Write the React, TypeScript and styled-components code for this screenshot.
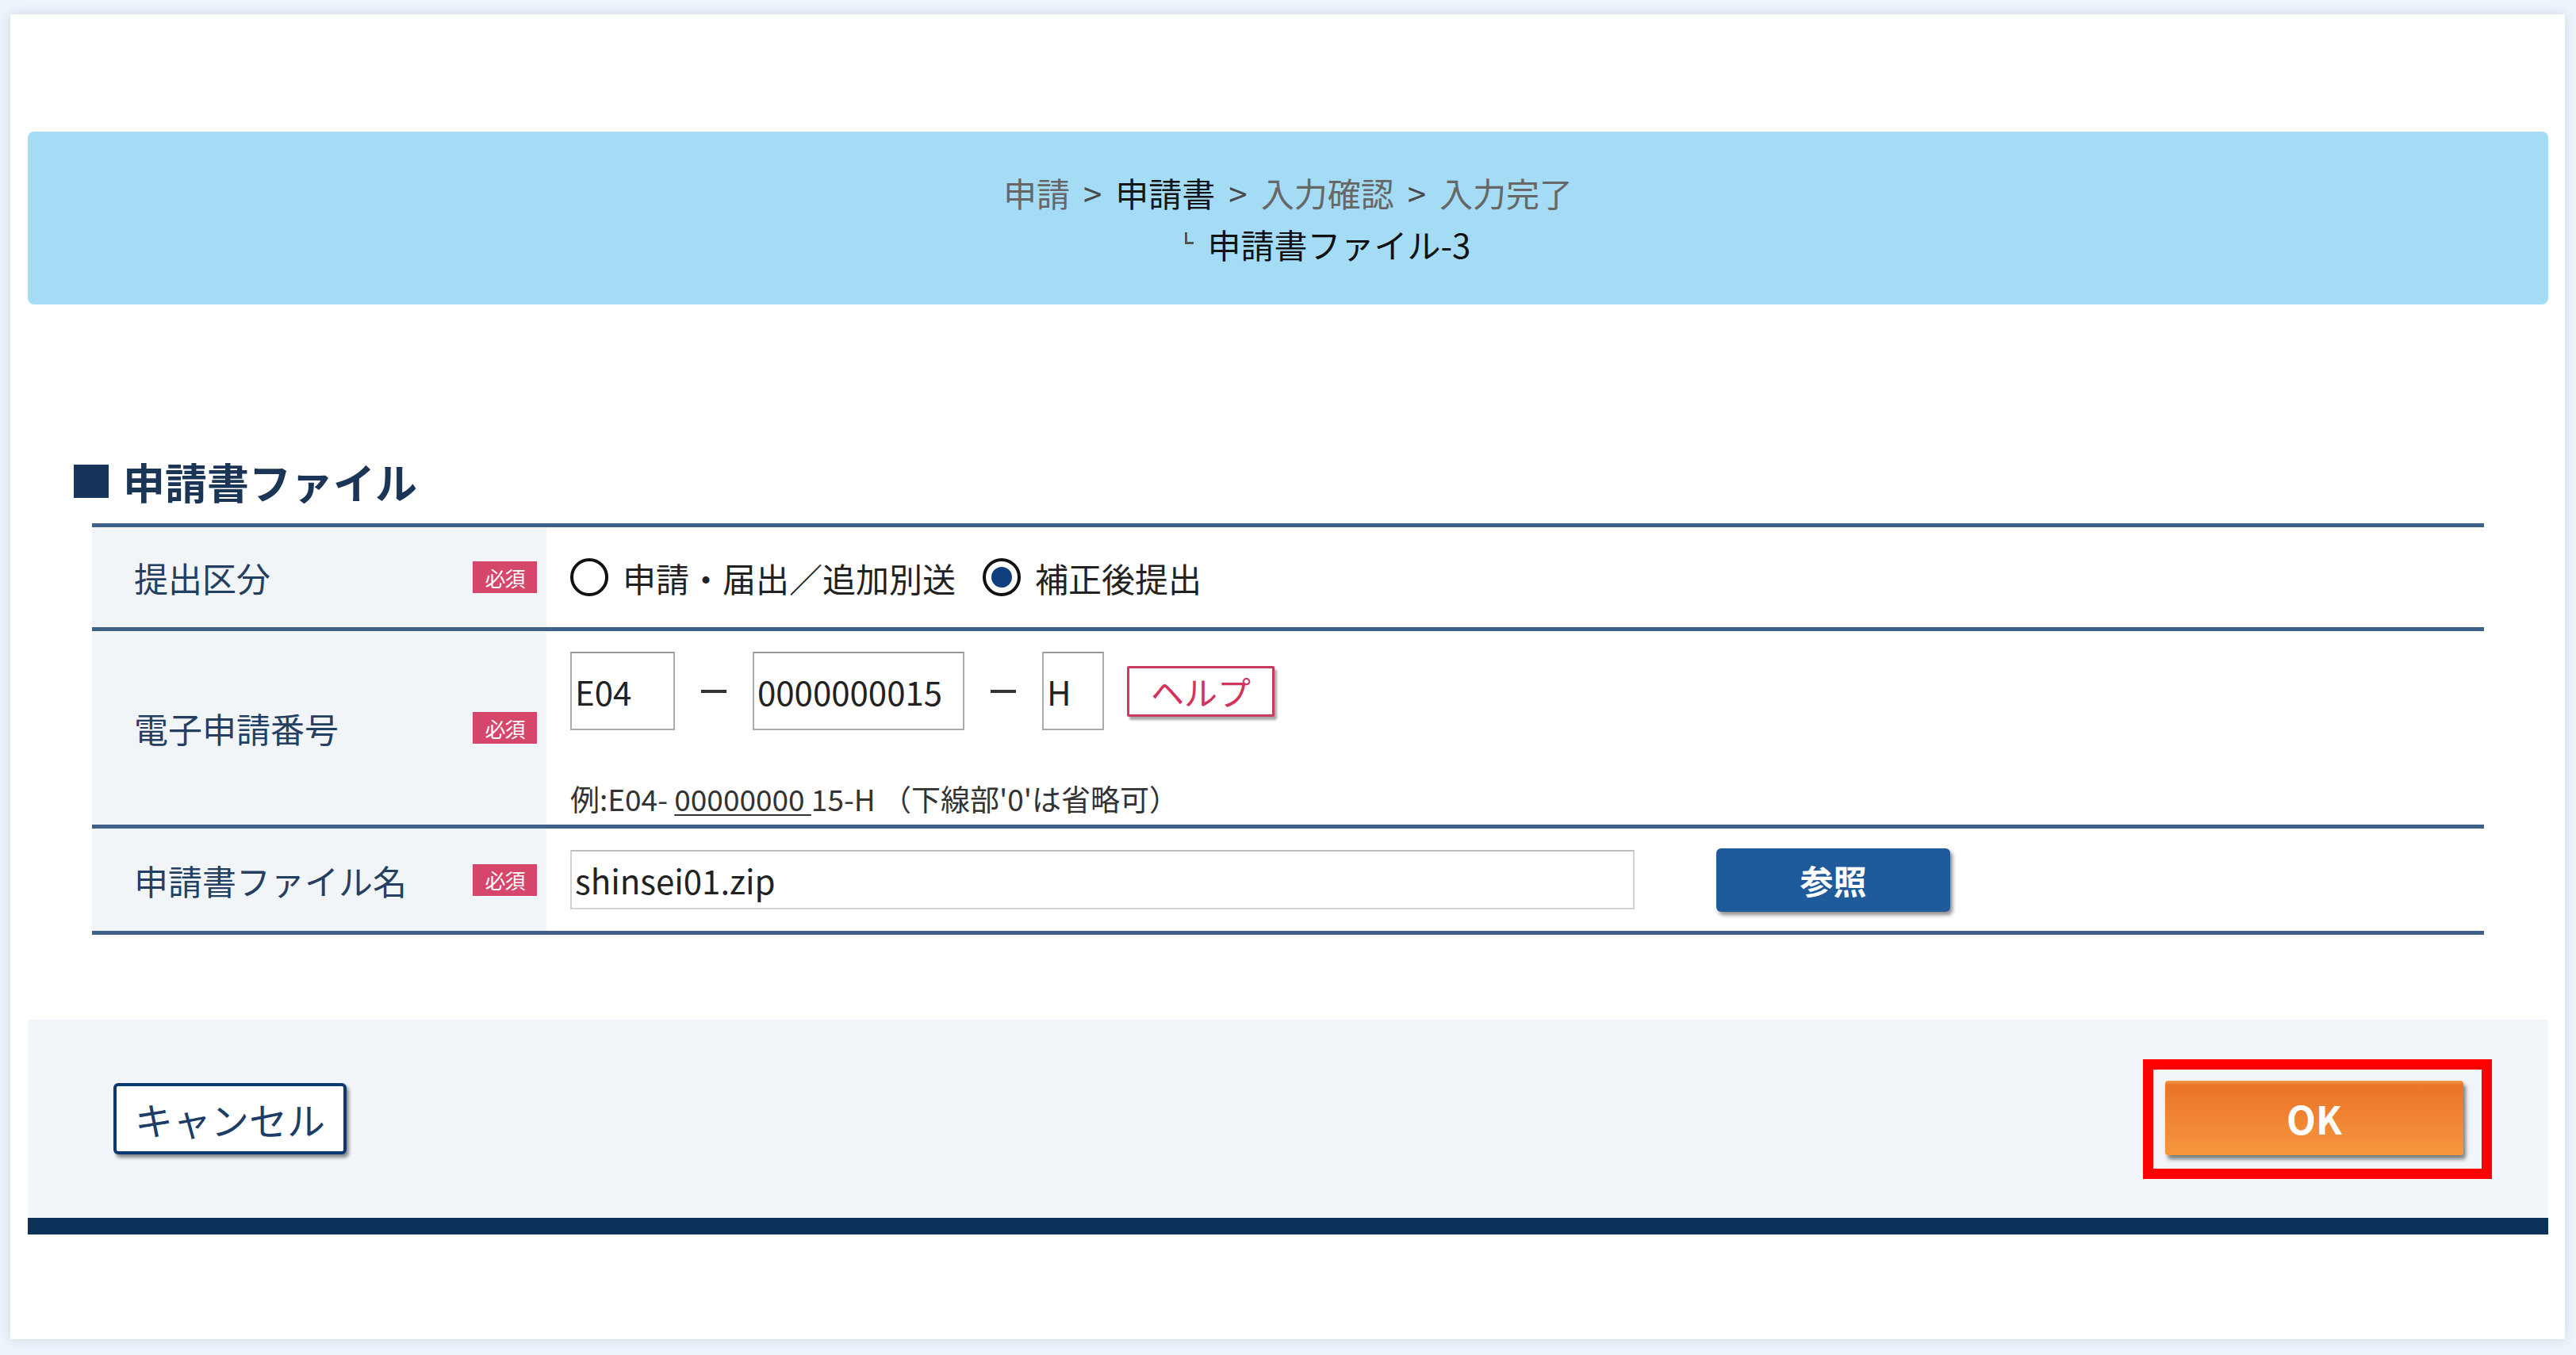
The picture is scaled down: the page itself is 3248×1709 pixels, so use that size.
import styled, { createGlobalStyle } from "styled-components";

const GlobalStyle = createGlobalStyle`
  body {
    margin: 0;
    background: #eef4fc;
    font-family: "Noto Sans CJK JP", "Noto Sans", sans-serif;
    color: #222;
  }
`;

const Page = styled.div`
  padding: 18px 14px 21px 13px;
`;

const Card = styled.div`
  background: #fff;
  box-shadow: 0 0 14px rgba(40, 60, 90, 0.16);
  padding: 148px 21px 132px 22px;
`;

const Banner = styled.div`
  background: #a4dbf5;
  border-radius: 8px;
  padding: 44px 0 44px;
  text-align: center;
  font-size: 42px;
  line-height: 65px;
`;

const Crumb = styled.span<{ current?: boolean }>`
  color: ${({ current }) => (current ? "#151515" : "#676767")};
`;

const Sep = styled.span`
  color: #4a4a4a;
  margin: 0 17px;
`;

const SubCrumb = styled.div`
  color: #111;
  display: flex;
  justify-content: center;
  align-items: center;
  padding-left: 100px;
`;

const Corner = styled.span`
  display: inline-block;
  width: 8px;
  height: 12px;
  border-left: 3px solid #555;
  border-bottom: 3px solid #555;
  margin: -14px 18px 0 0;
`;

const Title = styled.h2`
  margin: 193px 0 23px 58px;
  display: flex;
  align-items: center;
  font-size: 53px;
  line-height: 60px;
  font-weight: 700;
  color: #1b3556;
  &::before {
    content: "";
    width: 44px;
    height: 42px;
    background: #17355a;
    margin-right: 18px;
  }
`;

const Table = styled.div`
  margin: 0 81px;
  border-bottom: 5px solid #3f6089;
`;

const Row = styled.div<{ h: number }>`
  display: grid;
  grid-template-columns: 573px 1fr;
  height: ${({ h }) => h}px;
  border-top: 5px solid #3f6089;
`;

const Label = styled.div`
  background: #f2f5f8;
  display: flex;
  align-items: center;
  justify-content: space-between;
  padding: 0 12px 0 53px;
  font-size: 43px;
  color: #253f62;
`;

const Badge = styled.span`
  width: 81px;
  height: 40px;
  background: #d6456a;
  color: #fff;
  font-size: 26px;
  display: flex;
  align-items: center;
  justify-content: center;
  letter-spacing: -1px;
`;

const Value = styled.div`
  padding-left: 30px;
  display: flex;
  align-items: center;
  font-size: 42px;
`;

const StackValue = styled(Value)`
  flex-direction: column;
  align-items: flex-start;
  justify-content: flex-start;
  padding-top: 26px;
`;

const RadioMark = styled.span<{ checked?: boolean }>`
  width: 48px;
  height: 48px;
  box-sizing: border-box;
  border-radius: 50%;
  border: 4px solid #111;
  display: inline-flex;
  align-items: center;
  justify-content: center;
  margin-right: 18px;
  &::after {
    content: "";
    width: 26px;
    height: 26px;
    border-radius: 50%;
    background: ${({ checked }) => (checked ? "#0f3f7c" : "transparent")};
  }
`;

const RadioLabel = styled.span`
  color: #222;
  margin-right: 34px;
`;

const InputLine = styled.div`
  display: flex;
  align-items: center;
  height: 99px;
`;

const TextBox = styled.input<{ w: number; h: number }>`
  width: ${({ w }) => w}px;
  height: ${({ h }) => h}px;
  box-sizing: border-box;
  border: 2px solid #aaa;
  border-top-color: #999;
  padding: 0 4px;
  font-family: inherit;
  font-size: 42px;
  color: #222;
  background: #fff;
  outline: none;
`;

const FileBox = styled(TextBox)`
  border-color: #d2d2d2;
  border-top-color: #bcbcbc;
`;

const Dash = styled.span`
  width: 98px;
  display: flex;
  justify-content: center;
  &::before {
    content: "";
    width: 32px;
    height: 4px;
    background: #333;
  }
`;

const HelpButton = styled.button`
  margin-left: 29px;
  width: 186px;
  height: 64px;
  background: #fff;
  border: 3px solid #c93a5f;
  border-radius: 2px;
  color: #d2335c;
  font-family: inherit;
  font-size: 42px;
  line-height: 1;
  box-shadow: 3px 4px 3px rgba(0, 0, 0, 0.35);
  padding: 0;
`;

const Example = styled.div`
  margin-top: 66px;
  font-size: 37px;
  line-height: 40px;
  color: #333;
  u {
    text-decoration-thickness: 2px;
    text-underline-offset: 4px;
  }
`;

const BrowseButton = styled.button`
  margin-left: 103px;
  width: 295px;
  height: 80px;
  background: #1f5b9b;
  border: none;
  border-radius: 6px;
  color: #fff;
  font-family: inherit;
  font-size: 42px;
  font-weight: 700;
  box-shadow: 3px 4px 5px rgba(0, 0, 0, 0.45);
`;

const Footer = styled.div`
  margin-top: 107px;
  height: 250px;
  background: #f2f6fa;
  display: flex;
  align-items: center;
  justify-content: space-between;
  padding: 0 71px 0 108px;
`;

const NavyBar = styled.div`
  height: 21px;
  background: #0d3259;
`;

const CancelButton = styled.button`
  width: 294px;
  height: 90px;
  background: #fff;
  border: 4px solid #0d3a6e;
  border-radius: 6px;
  color: #1d3d66;
  font-family: inherit;
  font-size: 48px;
  box-shadow: 3px 4px 4px rgba(0, 0, 0, 0.45);
  padding: 0;
`;

const Highlight = styled.div`
  border: 13px solid #ff0000;
  padding: 14px 23px 17px 15px;
  display: flex;
`;

const OkButton = styled.button`
  width: 376px;
  height: 94px;
  background: linear-gradient(#f39a50 0, #ea7427 6%, #f7963f 100%);
  border: none;
  border-radius: 4px;
  color: #fff;
  font-family: inherit;
  font-size: 48px;
  font-weight: 700;
  box-shadow: 3px 5px 5px rgba(0, 0, 0, 0.5);
`;

export default function App() {
  return (
    <>
      <GlobalStyle />
      <Page>
        <Card>
          <Banner>
            <div>
              <Crumb>申請</Crumb>
              <Sep>&gt;</Sep>
              <Crumb current>申請書</Crumb>
              <Sep>&gt;</Sep>
              <Crumb>入力確認</Crumb>
              <Sep>&gt;</Sep>
              <Crumb>入力完了</Crumb>
            </div>
            <SubCrumb>
              <Corner />
              申請書ファイル-3
            </SubCrumb>
          </Banner>

          <Title>申請書ファイル</Title>

          <Table>
            <Row h={126}>
              <Label>
                提出区分<Badge>必須</Badge>
              </Label>
              <Value>
                <RadioMark />
                <RadioLabel>申請・届出／追加別送</RadioLabel>
                <RadioMark checked />
                <RadioLabel>補正後提出</RadioLabel>
              </Value>
            </Row>
            <Row h={244}>
              <Label>
                電子申請番号<Badge>必須</Badge>
              </Label>
              <StackValue>
                <InputLine>
                  <TextBox w={132} h={99} defaultValue="E04" />
                  <Dash />
                  <TextBox w={267} h={99} defaultValue="0000000015" />
                  <Dash />
                  <TextBox w={78} h={99} defaultValue="H" />
                  <HelpButton>ヘルプ</HelpButton>
                </InputLine>
                <Example>
                  例:E04- <u>00000000 </u>15-H （下線部'0'は省略可）
                </Example>
              </StackValue>
            </Row>
            <Row h={129}>
              <Label>
                申請書ファイル名<Badge>必須</Badge>
              </Label>
              <Value>
                <FileBox w={1342} h={75} defaultValue="shinsei01.zip" />
                <BrowseButton>参照</BrowseButton>
              </Value>
            </Row>
          </Table>

          <Footer>
            <CancelButton>キャンセル</CancelButton>
            <Highlight>
              <OkButton>OK</OkButton>
            </Highlight>
          </Footer>
          <NavyBar />
        </Card>
      </Page>
    </>
  );
}
